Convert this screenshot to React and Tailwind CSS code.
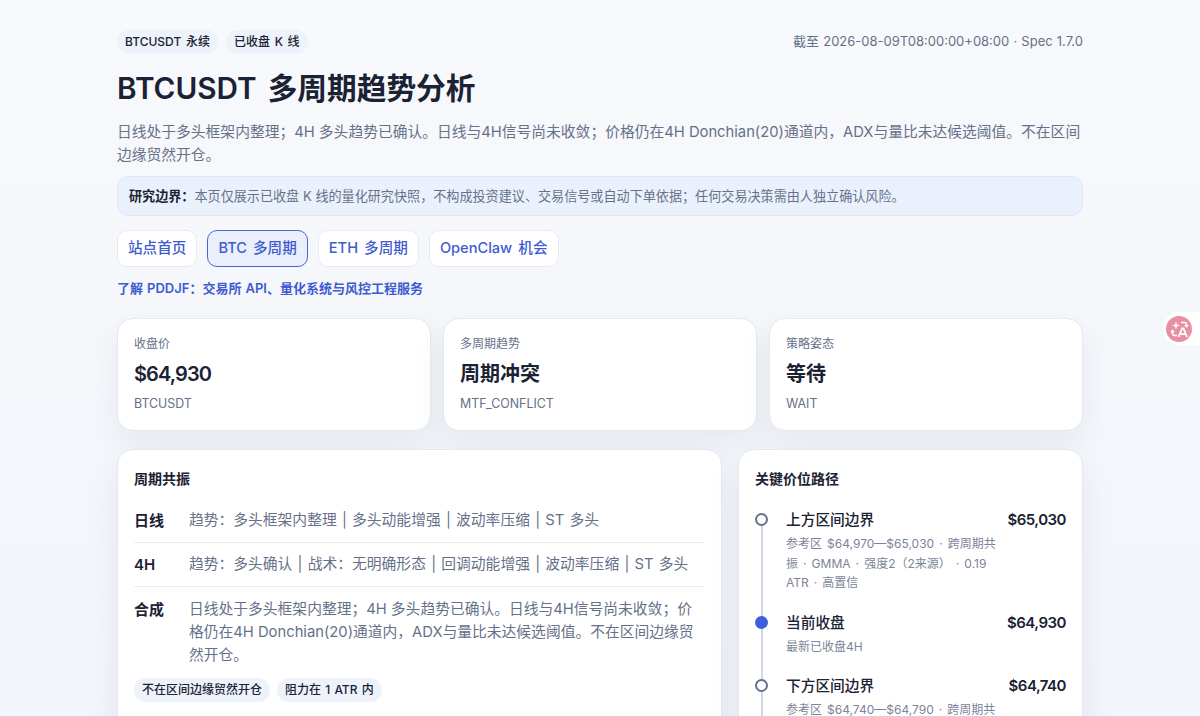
import React from 'react';

const font = { fontFamily: 'Inter, "Noto Sans CJK SC", sans-serif' };

const stats = [
  { label: '收盘价', value: '$64,930', sub: 'BTCUSDT', latin: true },
  { label: '多周期趋势', value: '周期冲突', sub: 'MTF_CONFLICT' },
  { label: '策略姿态', value: '等待', sub: 'WAIT' },
];

const tabs = [
  { label: '站点首页' },
  { label: 'BTC 多周期', active: true },
  { label: 'ETH 多周期' },
  { label: 'OpenClaw 机会' },
];

const levels = [
  {
    name: '上方区间边界',
    price: '$65,030',
    note: '参考区 $64,970—$65,030 · 跨周期共振 · GMMA · 强度2（2来源） · 0.19 ATR · 高置信',
  },
  { name: '当前收盘', price: '$64,930', note: '最新已收盘4H', current: true },
  {
    name: '下方区间边界',
    price: '$64,740',
    note: '参考区 $64,740—$64,790 · 跨周期共振 · GMMA · 强度2（2来源） · 0.75 ATR · 高置信',
  },
];

function TranslateIcon() {
  return (
    <svg width="26" height="26" viewBox="0 0 26 26">
      <circle cx="13" cy="13" r="13" fill="#e88fa6" />
      <path d="M10 5.5l1.1 2.9 2.9 1.1-2.9 1.1L10 13.5l-1.1-2.9-2.9-1.1 2.9-1.1z" fill="#fff" />
      <path d="M15 6.5h3.5a2 2 0 0 1 2 2v2M18.8 9l1.7 1.8 1.7-1.8" fill="none" stroke="#fff" strokeWidth="1.4" />
      <path d="M6.5 14.5v3a2 2 0 0 0 2 2H11M4.9 16.2l1.6-1.8 1.7 1.8" fill="none" stroke="#fff" strokeWidth="1.4" />
      <path d="M12.5 21l3.6-8.5h1.4L21 21M14 18.2h5.6" fill="none" stroke="#fff" strokeWidth="1.8" />
    </svg>
  );
}

function Row({ label, children, last }) {
  return (
    <div className={last ? 'flex pt-[11px] pb-[10px]' : 'flex border-b border-[#e9edf4] py-[10px] [word-spacing:1.1px]'}>
      <div className="w-[55px] shrink-0 text-[15px] leading-[23px] font-semibold text-[#1a2233]">{label}</div>
      <div className="flex-1 text-[14.77px] leading-[23px] text-[#667189]">{children}</div>
    </div>
  );
}

export default function App() {
  return (
    <div
      style={font}
      className="relative h-[716px] overflow-hidden bg-gradient-to-b from-[#f7f9fc] to-[#f2f5fa] text-[#1a2233]"
    >
      <div className="mx-auto w-[966px] pt-[30px]">
        <div className="flex items-center justify-between">
          <div className="flex gap-[8px] [word-spacing:1.5px]">
            <span className="rounded-full bg-[#edf2fb] px-[8px] py-[4px] text-[12px] leading-[16px] font-medium">BTCUSDT 永续</span>
            <span className="rounded-full bg-[#edf2fb] px-[8px] py-[4px] text-[12px] leading-[16px] font-medium">已收盘 K 线</span>
          </div>
          <div className="text-[13px] text-[#667189] [word-spacing:0.5px]">截至 2026-08-09T08:00:00+08:00 · Spec 1.7.0</div>
        </div>

        <h1 className="mt-[14px] text-[29.7px] leading-[40px] font-semibold [word-spacing:3.5px]">BTCUSDT 多周期趋势分析</h1>
        <p className="mt-[13px] text-[14.77px] leading-[23px] text-[#667189]">
          日线处于多头框架内整理；4H 多头趋势已确认。日线与4H信号尚未收敛；价格仍在4H Donchian(20)通道内，ADX与量比未达候选阈值。不在区间边缘贸然开仓。
        </p>

        <div className="mt-[9px] rounded-[12px] border border-[#dfe7f5] bg-[#eaf1fd] px-[11px] py-[10px] text-[13.1px] leading-[18px] text-[#667189]">
          <strong className="font-semibold text-[#1a2233]">研究边界：</strong>
          本页仅展示已收盘 K 线的量化研究快照，不构成投资建议、交易信号或自动下单依据；任何交易决策需由人独立确认风险。
        </div>

        <div className="mt-[14px] flex gap-[10px] [word-spacing:2.2px]">
          {tabs.map((t) => (
            <a
              key={t.label}
              className={`h-[37px] rounded-[10px] border px-[10px] text-[14.6px] leading-[35px] font-medium text-[#3f5bd0] ${
                t.active ? 'border-[#4a66d6] bg-[#e9effb]' : 'border-[#e6ebf3] bg-white'
              }`}
            >
              {t.label}
            </a>
          ))}
        </div>

        <a className="mt-[12px] block text-[13px] leading-[18px] font-semibold text-[#3f5bd0] [word-spacing:0.8px]">
          了解 PDDJF：交易所 API、量化系统与风控工程服务
        </a>

        <div className="mt-[21px] grid grid-cols-3 gap-[12px]">
          {stats.map((s) => (
            <div
              key={s.label}
              className="h-[113px] rounded-[16px] border border-[#e4e9f1] bg-white px-[16px] pt-[16px] shadow-[0_12px_32px_rgba(30,50,90,0.07)]"
            >
              <div className="text-[12px] leading-[17px] text-[#667189]">{s.label}</div>
              <div className={`mt-[7px] text-[20px] leading-[30px] font-semibold ${s.latin ? 'tracking-[-0.9px]' : ''}`}>{s.value}</div>
              <div className="mt-[6px] text-[12.4px] leading-[17px] text-[#667189]">{s.sub}</div>
            </div>
          ))}
        </div>

        <div className="mt-[18px] grid grid-cols-[605px_345px] gap-[16px]">
          <section className="rounded-[16px] border border-[#e4e9f1] bg-white px-[16px] pt-[19px] pb-[16px] shadow-[0_12px_32px_rgba(30,50,90,0.07)]">
            <h2 className="text-[14px] leading-[20px] font-semibold">周期共振</h2>
            <div className="mt-[9.5px]">
              <Row label="日线">趋势：多头框架内整理 | 多头动能增强 | 波动率压缩 | ST 多头</Row>
              <Row label="4H">趋势：多头确认 | 战术：无明确形态 | 回调动能增强 | 波动率压缩 | ST 多头</Row>
              <Row label="合成" last>
                日线处于多头框架内整理；4H 多头趋势已确认。日线与4H信号尚未收敛；价格仍在4H Donchian(20)通道内，ADX与量比未达候选阈值。不在区间边缘贸然开仓。
              </Row>
            </div>
            <div className="mt-[1px] flex gap-[7px] [word-spacing:1px]">
              <span className="rounded-full bg-[#edf2fb] px-[8px] py-[4px] text-[12px] leading-[16px] font-medium">不在区间边缘贸然开仓</span>
              <span className="rounded-full bg-[#edf2fb] px-[8px] py-[4px] text-[12px] leading-[16px] font-medium">阻力在 1 ATR 内</span>
            </div>
          </section>

          <section className="rounded-[16px] border border-[#e4e9f1] bg-white px-[16px] pt-[19px] pb-[16px] shadow-[0_12px_32px_rgba(30,50,90,0.07)]">
            <h2 className="text-[14px] leading-[20px] font-semibold">关键价位路径</h2>
            <div className="relative mt-[20px] flex flex-col gap-[19px]">
              <div className="absolute top-[10px] bottom-0 left-[6px] w-[1.5px] bg-[#cdd7ea]" />
              {levels.map((l) => (
                <div key={l.name} className="relative flex">
                  <div className="w-[31px] shrink-0 pt-[4px]">
                    <div
                      className={`h-[13px] w-[13px] rounded-full border-2 ${
                        l.current ? 'border-[#3f5fdc] bg-[#3f5fdc]' : 'border-[#667189] bg-white'
                      }`}
                    />
                  </div>
                  <div className="flex flex-1 justify-between">
                    <div className="w-[212px]">
                      <div className="text-[14.7px] leading-[22px] font-medium">{l.name}</div>
                      <div className="mt-[3px] text-[12px] leading-[19.5px] text-[#7b8598] [word-spacing:1.7px]">{l.note}</div>
                    </div>
                    <div className="text-[15px] leading-[22px] font-semibold tracking-[-0.5px]">{l.price}</div>
                  </div>
                </div>
              ))}
            </div>
          </section>
        </div>
      </div>

      {/* translate extension tab */}
      <div className="absolute top-[312px] right-0 flex h-[33px] w-[37px] items-center rounded-l-full bg-white pl-[3px]">
        <TranslateIcon />
      </div>
    </div>
  );
}
